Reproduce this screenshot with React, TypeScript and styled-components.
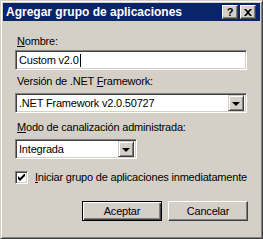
import React from 'react';
import styled, { createGlobalStyle } from 'styled-components';

const GlobalStyle = createGlobalStyle`
  html, body {
    margin: 0;
    padding: 0;
    background: #d4d0c8;
  }
  * {
    box-sizing: border-box;
  }
`;

const face = '#d4d0c8';
const uiFont = `'Liberation Sans', Arial, sans-serif`;

export default function App() {
  return (
    <>
      <GlobalStyle />
      <Window>
        <TitleBar>
          <TitleText>Agregar grupo de aplicaciones</TitleText>
          <CaptionButtons>
            <CaptionButton aria-label="Ayuda">
              <HelpGlyph>?</HelpGlyph>
            </CaptionButton>
            <CaptionButton aria-label="Cerrar">
              <svg width="8" height="7" viewBox="0 0 8 7">
                <path d="M0 0h2l2 2 2-2h2L5 3.5 8 7H6L4 5 2 7H0l3-3.5z" fill="#000" />
              </svg>
            </CaptionButton>
          </CaptionButtons>
        </TitleBar>

        <Body>
          <Label $top={14}>
            <u>N</u>ombre:
          </Label>
          <TextField $width={232}>
            Custom v2.0
            <Caret />
          </TextField>

          <Label $top={5}>
            Versión de .NET <u>F</u>ramework:
          </Label>
          <ComboBox $width={232}>
            <ComboValue>.NET Framework v2.0.50727</ComboValue>
            <DropButton>
              <Arrow />
            </DropButton>
          </ComboBox>

          <Label $top={8}>
            <u>M</u>odo de canalización administrada:
          </Label>
          <ComboBox $width={122}>
            <ComboValue>Integrada</ComboValue>
            <DropButton>
              <Arrow />
            </DropButton>
          </ComboBox>

          <CheckRow>
            <CheckBox>
              <svg width="7" height="7" viewBox="0 0 7 7">
                <path d="M0 2v3l2 2 5-5V-1L2 4z" fill="#000" />
              </svg>
            </CheckBox>
            <CheckLabel>
              <u>I</u>niciar grupo de aplicaciones inmediatamente
            </CheckLabel>
          </CheckRow>

          <ButtonRow>
            <PushButton $default>Aceptar</PushButton>
            <PushButton>Cancelar</PushButton>
          </ButtonRow>
        </Body>
      </Window>
    </>
  );
}

const Window = styled.div`
  width: 263px;
  height: 239px;
  display: flex;
  flex-direction: column;
  padding: 2px;
  background: ${face};
  border: 1px solid;
  border-color: ${face} #404040 #404040 ${face};
  box-shadow: inset 1px 1px #ffffff, inset -1px -1px #808080;
  font-family: ${uiFont};
  font-size: 11px;
  letter-spacing: -0.2px;
  color: #000;
`;

const TitleBar = styled.div`
  height: 18px;
  display: flex;
  align-items: center;
  justify-content: space-between;
  padding: 0 4px 0 3px;
  background: #0a246a;
`;

const TitleText = styled.span`
  color: #fff;
  font-weight: bold;
  font-size: 12px;
  letter-spacing: 0;
  line-height: 18px;
  white-space: nowrap;
`;

const CaptionButtons = styled.div`
  display: flex;
  gap: 2px;
`;

const CaptionButton = styled.div`
  width: 16px;
  height: 14px;
  display: flex;
  align-items: center;
  justify-content: center;
  background: ${face};
  border: 1px solid;
  border-color: #ffffff #404040 #404040 #ffffff;
  box-shadow: inset -1px -1px #808080;
`;

const HelpGlyph = styled.span`
  font-weight: bold;
  font-size: 11px;
  line-height: 11px;
  color: #000;
`;

const Body = styled.div`
  display: flex;
  flex-direction: column;
  align-items: flex-start;
  padding: 0 13px 0 12px;
`;

const Label = styled.div<{ $top: number }>`
  margin-top: ${({ $top }) => $top}px;
  margin-bottom: 2px;
  padding-left: 2px;
  line-height: 13px;
  white-space: nowrap;
`;

const sunken = `
  border: 1px solid;
  border-color: #808080 #ffffff #ffffff #808080;
  box-shadow: inset 1px 1px #404040, inset -1px -1px ${face};
`;

const TextField = styled.div<{ $width: number }>`
  width: ${({ $width }) => $width}px;
  height: 20px;
  display: flex;
  align-items: center;
  padding: 0 3px;
  background: #fff;
  ${sunken}
  line-height: 13px;
`;

const Caret = styled.span`
  display: inline-block;
  width: 1px;
  height: 13px;
  background: #000;
  margin-left: 1px;
`;

const ComboBox = styled.div<{ $width: number }>`
  width: ${({ $width }) => $width}px;
  height: 20px;
  margin-top: 3px;
  display: flex;
  align-items: center;
  padding: 2px;
  background: #fff;
  ${sunken}
`;

const ComboValue = styled.span`
  flex: 1;
  padding-left: 1px;
  line-height: 13px;
  white-space: nowrap;
`;

const DropButton = styled.div`
  width: 16px;
  height: 16px;
  display: flex;
  align-items: center;
  justify-content: center;
  background: ${face};
  border: 1px solid;
  border-color: ${face} #404040 #404040 ${face};
  box-shadow: inset 1px 1px #ffffff, inset -1px -1px #808080;
`;

const Arrow = styled.span`
  width: 0;
  height: 0;
  border-left: 4px solid transparent;
  border-right: 4px solid transparent;
  border-top: 4px solid #000;
  margin-top: 1px;
`;

const CheckRow = styled.label`
  display: flex;
  align-items: center;
  gap: 7px;
  margin-top: 12px;
`;

const CheckBox = styled.span`
  width: 13px;
  height: 13px;
  display: flex;
  align-items: center;
  justify-content: center;
  background: #fff;
  ${sunken}
`;

const CheckLabel = styled.span`
  line-height: 13px;
  white-space: nowrap;
`;

const ButtonRow = styled.div`
  align-self: stretch;
  display: flex;
  justify-content: flex-end;
  gap: 6px;
  margin-top: 17px;
  margin-right: -1px;
`;

const PushButton = styled.div<{ $default?: boolean }>`
  width: 80px;
  height: 20px;
  display: flex;
  align-items: center;
  justify-content: center;
  background: ${face};
  border: 1px solid;
  border-color: ${({ $default }) =>
    $default ? '#000' : '#ffffff #404040 #404040 #ffffff'};
  box-shadow: ${({ $default }) =>
    $default
      ? 'inset 1px 1px #ffffff, inset -1px -1px #404040, inset -2px -2px #808080'
      : 'inset -1px -1px #808080'};
  line-height: 13px;
`;
